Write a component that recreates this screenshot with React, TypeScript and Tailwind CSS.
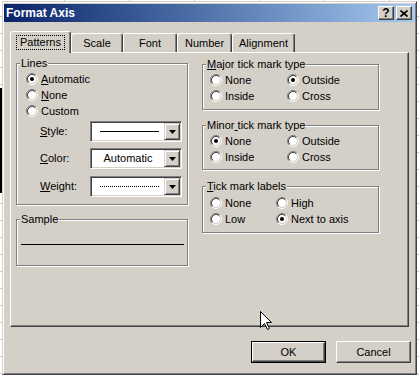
import type { ReactNode } from "react";

const face = "bg-[#d4d0c8]";

function Radio({ checked = false }: { checked?: boolean }) {
  return (
    <svg width="12" height="12" viewBox="0 0 12 12" className="shrink-0">
      <circle cx="6" cy="6" r="4.2" fill="#fff" />
      <path d="M2.11 9.89 A5.5 5.5 0 0 1 9.89 2.11" fill="none" stroke="#808080" />
      <path d="M9.89 2.11 A5.5 5.5 0 0 1 2.11 9.89" fill="none" stroke="#fff" />
      <path d="M2.82 9.18 A4.5 4.5 0 0 1 9.18 2.82" fill="none" stroke="#404040" />
      <path d="M9.18 2.82 A4.5 4.5 0 0 1 2.82 9.18" fill="none" stroke="#d4d0c8" />
      {checked && <circle cx="6" cy="6" r="2" fill="#000" />}
    </svg>
  );
}

function Option({ checked, children }: { checked?: boolean; children: ReactNode }) {
  return (
    <div className="flex h-[16px] items-center gap-[3px]">
      <Radio checked={checked} />
      <span>{children}</span>
    </div>
  );
}

function Group({
  label,
  className,
  children,
}: {
  label: ReactNode;
  className: string;
  children?: ReactNode;
}) {
  return (
    <div
      className={
        "relative border border-[#808080] shadow-[1px_1px_0_#fff,inset_1px_1px_0_#fff] " +
        className
      }
    >
      <span className="absolute -top-[8px] left-[3px] bg-[#d4d0c8] px-[1px] leading-[14px]">
        {label}
      </span>
      {children}
    </div>
  );
}

function Combo({ children }: { children: ReactNode }) {
  return (
    <div className="flex h-[21px] w-[92px] border border-b-white border-l-[#808080] border-r-white border-t-[#808080] bg-white p-[1px] shadow-[inset_1px_1px_0_#404040,inset_-1px_-1px_0_#d4d0c8]">
      <div className="flex flex-1 items-center">{children}</div>
      <div className="flex h-[17px] w-[16px] items-center justify-center border border-b-[#404040] border-l-[#d4d0c8] border-r-[#404040] border-t-[#d4d0c8] bg-[#d4d0c8] shadow-[inset_1px_1px_0_#fff,inset_-1px_-1px_0_#808080]">
        <svg width="7" height="4" viewBox="0 0 7 4">
          <path d="M0 0h7L3.5 4z" fill="#000" />
        </svg>
      </div>
    </div>
  );
}

function Tab({ label, width, active }: { label: string; width: string; active?: boolean }) {
  return (
    <div
      className={
        "flex items-center justify-center rounded-t-[3px] border-l border-t border-r border-l-white border-t-white border-r-[#404040] bg-[#d4d0c8] shadow-[inset_-1px_0_0_#808080] " +
        width +
        (active ? " relative z-10 -mb-[1px] h-[22px] pb-[1px]" : " h-[19px]")
      }
    >
      {active ? (
        <span className="px-[3px] leading-[13px] outline outline-1 outline-dotted outline-black">
          {label}
        </span>
      ) : (
        <span>{label}</span>
      )}
    </div>
  );
}

function Button({ label, primary }: { label: string; primary?: boolean }) {
  return (
    <div className={primary ? "border border-black" : ""}>
      <div
        className={
          "flex items-center justify-center border border-b-[#404040] border-l-white border-r-[#404040] border-t-white shadow-[inset_-1px_-1px_0_#808080] " +
          (primary ? "h-[20px] w-[73px]" : "h-[22px] w-[75px]")
        }
      >
        {label}
      </div>
    </div>
  );
}

function TitleButton({ children }: { children: ReactNode }) {
  return (
    <div className="flex h-[14px] w-[16px] items-center justify-center border border-b-[#404040] border-l-white border-r-[#404040] border-t-white bg-[#d4d0c8] shadow-[inset_-1px_-1px_0_#808080]">
      {children}
    </div>
  );
}

export default function App() {
  return (
    <div className="relative h-[375px] w-[419px] overflow-hidden bg-white bg-[repeating-linear-gradient(to_bottom,transparent_0_16px,#c8c8c8_16px_17px),repeating-linear-gradient(to_right,transparent_0_64px,#c8c8c8_64px_65px)] pl-[2px] pt-[1px] font-['Liberation_Sans',Arial,sans-serif] text-[11px] text-black">
      <div className="absolute left-0 top-[88px] h-[105px] w-[2px] bg-black" />

      <div
        className={
          "h-[374px] w-[415px] border border-b-[#404040] border-l-[#d4d0c8] border-r-[#404040] border-t-[#d4d0c8] px-[1px] pt-[2px] shadow-[inset_1px_1px_0_#fff,inset_-1px_-1px_0_#808080] " +
          face
        }
      >
        {/* title bar */}
        <div className="flex h-[18px] items-center bg-gradient-to-r from-[#0a246a] to-[#a6caf0] pl-[2px] pr-[3px]">
          <span className="flex-1 text-[12px] font-bold text-white">Format Axis</span>
          <div className="flex gap-[2px]">
            <TitleButton>
              <span className="text-[12px] font-bold leading-none">?</span>
            </TitleButton>
            <TitleButton>
              <svg width="8" height="7" viewBox="0 0 8 7">
                <path d="M0.5 0.5L7.5 6.5M7.5 0.5L0.5 6.5" stroke="#000" strokeWidth="1.7" />
              </svg>
            </TitleButton>
          </div>
        </div>

        {/* tabs */}
        <div className="ml-[6px] mt-[9px] flex h-[21px] items-end">
          <Tab label="Patterns" width="w-[61px]" active />
          <Tab label="Scale" width="w-[52px]" />
          <Tab label="Font" width="w-[54px]" />
          <Tab label="Number" width="w-[55px]" />
          <Tab label="Alignment" width="w-[63px]" />
        </div>

        {/* panel */}
        <div className="ml-[6px] flex h-[275px] w-[399px] gap-[14px] border border-b-[#404040] border-l-white border-r-[#404040] border-t-white pl-[5px] pt-[10px] shadow-[inset_-1px_-1px_0_#808080]">
          <div className="flex w-[172px] flex-col gap-[14px]">
            <Group label="Lines" className="h-[142px] pl-[9px] pt-[7px]">
              <Option checked>
                <u>A</u>utomatic
              </Option>
              <Option>
                <u>N</u>one
              </Option>
              <Option>Custom</Option>
              <div className="ml-[14px] mt-[2px] flex flex-col">
                <div className="flex items-center">
                  <span className="w-[50px]">
                    <u>S</u>tyle:
                  </span>
                  <Combo>
                    <div className="ml-[8px] h-px w-[59px] bg-black" />
                  </Combo>
                </div>
                <div className="mt-[6px] flex items-center">
                  <span className="w-[50px]">
                    <u>C</u>olor:
                  </span>
                  <Combo>
                    <span className="w-full text-center">Automatic</span>
                  </Combo>
                </div>
                <div className="mt-[7px] flex items-center">
                  <span className="w-[50px]">
                    <u>W</u>eight:
                  </span>
                  <Combo>
                    <div className="ml-[8px] w-[59px] border-t border-dotted border-black" />
                  </Combo>
                </div>
              </div>
            </Group>
            <Group label="Sample" className="h-[47px] pl-[4px] pt-[24px]">
              <div className="h-px w-[163px] bg-black" />
            </Group>
          </div>

          <div className="flex w-[177px] flex-col pt-[1px]">
            <Group label={<><u>M</u>ajor tick mark type</>} className="h-[46px] pl-[7px] pt-[7px]">
              <div className="grid grid-cols-[77px_1fr]">
                <Option>None</Option>
                <Option checked>Outside</Option>
                <Option>Inside</Option>
                <Option>Cross</Option>
              </div>
            </Group>
            <Group
              label={<>Minor<u> </u>tick mark type</>}
              className="mt-[15px] h-[45px] pl-[7px] pt-[7px]"
            >
              <div className="grid grid-cols-[77px_1fr]">
                <Option checked>None</Option>
                <Option>Outside</Option>
                <Option>Inside</Option>
                <Option>Cross</Option>
              </div>
            </Group>
            <Group
              label={<><u>T</u>ick mark labels</>}
              className="mt-[16px] h-[47px] pl-[7px] pt-[8px]"
            >
              <div className="grid grid-cols-[66px_1fr]">
                <Option>None</Option>
                <Option>High</Option>
                <Option>Low</Option>
                <Option checked>Next to axis</Option>
              </div>
            </Group>
          </div>
        </div>

        {/* buttons */}
        <div className="ml-[247px] mt-[14px] flex gap-[10px]">
          <Button label="OK" primary />
          <Button label="Cancel" />
        </div>
      </div>

      {/* mouse pointer */}
      <svg className="absolute left-[260px] top-[311px]" width="13" height="20" viewBox="0 0 13 20">
        <path
          d="M0.5 0.5L0.5 16.5L4.5 12.5L7.5 18.5L9.5 17.5L6.5 11.5L11.5 11.5Z"
          fill="#fff"
          stroke="#000"
          strokeLinejoin="miter"
        />
      </svg>
    </div>
  );
}
